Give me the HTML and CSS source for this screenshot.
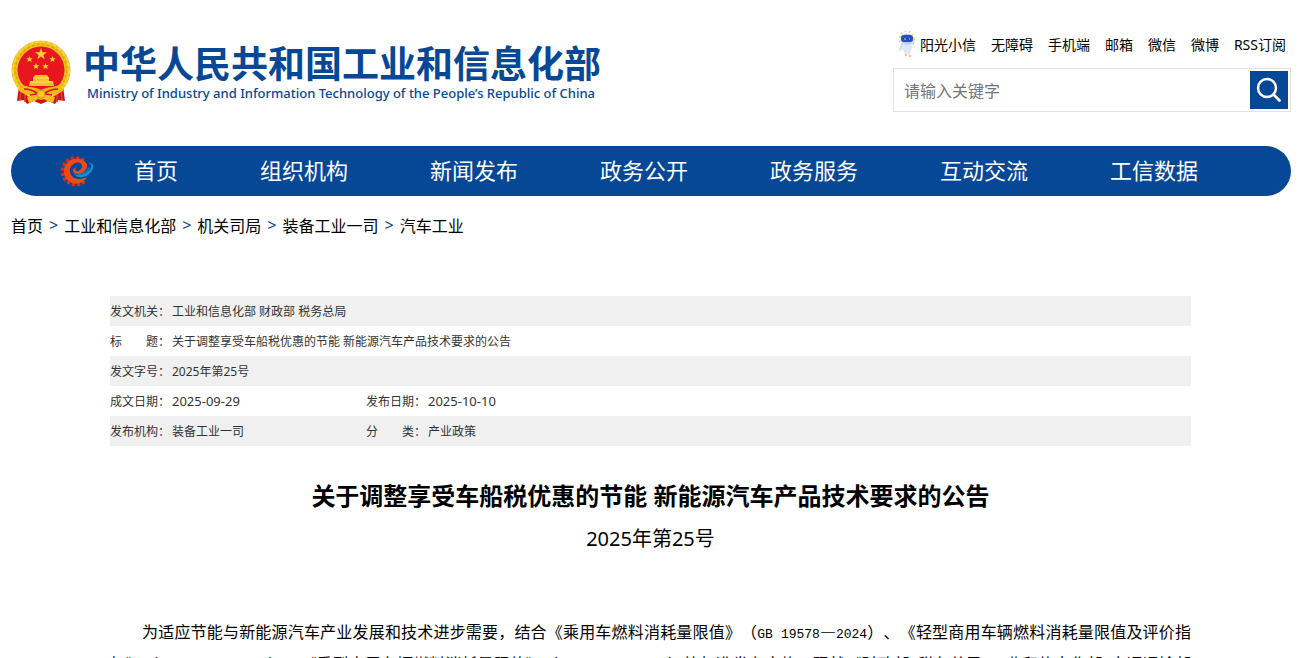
FILE: index.html
```html
<!DOCTYPE html>
<html lang="zh-CN">
<head>
<meta charset="utf-8">
<meta name="viewport" content="width=device-width, initial-scale=1">
<title>关于调整享受车船税优惠的节能 新能源汽车产品技术要求的公告</title>
<link rel="stylesheet" href="styles.css">
</head>
<body>
<div class="page">
  <header class="header">
    <a class="brand" href="#">
      <svg class="emblem" viewBox="0 0 60 66" aria-hidden="true">
        <path d="M8 46 L6 61 L13 60 L16 64 L23 61 L30 64 L37 61 L44 64 L47 60 L54 61 L52 46Z" fill="#c8141b"/>
        <path d="M10 50 L9 60 M14 52 L14 62 M19 54 L18 62 M50 50 L51 60 M46 52 L46 62 M41 54 L42 62" stroke="#ec3a2c" stroke-width="1.500"/>
        <circle cx="30" cy="30" r="29.500" fill="#f3c01f"/>
        <circle cx="30" cy="30" r="25.500" fill="none" stroke="#dfa51a" stroke-width="1.500" stroke-dasharray="3 2"/>
        <circle cx="30" cy="30" r="28" fill="none" stroke="#f9d845" stroke-width="1.500" stroke-dasharray="4 2"/>
        <circle cx="30" cy="30" r="23.500" fill="#e8161f"/>
        <path d="M30 8l1.500 4.200h4.500l-3.600 2.700 1.300 4.300-3.700-2.600-3.700 2.600 1.300-4.300-3.600-2.700h4.500z" fill="#fbd32a"/>
        <g fill="#fbd32a">
          <path id="star" d="M18.500 16l.9 2.200h2.400l-1.900 1.500.7 2.400-2.100-1.400-2.100 1.400.7-2.400-1.900-1.500h2.400z"/>
          <use href="#star" x="23"/><use href="#star" x="6.500" y="7"/><use href="#star" x="16" y="7"/>
        </g>
        <path d="M24 35h12l2 3v3h4l1 5H18l1-5h3v-3z" fill="#f5c02a"/>
        <path d="M22 38h16M20 42h20" stroke="#fde36c" stroke-width="1"/>
        <path d="M9 43 C15 48 22 46 30 50 C38 46 45 48 51 43 L52 51 C44 56 37 54 30 60 C23 54 16 56 8 51Z" fill="#f2b71a"/>
        <path d="M13 49c6 0 10 2 13 4M47 49c-6 0-10 2-13 4M19 55l7-1M41 55l-7-1" fill="none" stroke="#d8191c" stroke-width="1.600"/>
        <circle cx="30" cy="54" r="4" fill="#f8ca2c" stroke="#d98d12"/>
        <path d="M16 57l8-2 2 5-8 3zM44 57l-8-2-2 5 8 3z" fill="#f4bb21"/>
      </svg>
      <span class="brand-text">
        <span class="brand-cn">中华人民共和国工业和信息化部</span>
        <span class="brand-en">Ministry of Industry and Information Technology of the People’s Republic of China</span>
      </span>
    </a>
    <div class="tools">
      <nav class="links" aria-label="快捷链接">
        <a class="robot-link" href="#">
          <svg class="robot" viewBox="0 0 18 26" aria-hidden="true">
            <circle cx="9" cy="8" r="7.500" fill="none" stroke="#f6cf3c" stroke-width="1.600" stroke-dasharray="1.500 2.600"/>
            <path d="M5 12h8l1 5-2 5H7l-3-4z" fill="#dfe8f7"/>
            <path d="M4 13l-2 6M14 13l2-3" stroke="#cbdcf3" stroke-width="2" stroke-linecap="round"/>
            <ellipse cx="9" cy="8" rx="6.500" ry="5.500" fill="#bccdf3"/>
            <rect x="3" y="4" width="12" height="7" rx="3" fill="#2850bd"/>
            <path d="M6 8h2M11 8h1" stroke="#8fd2ff"/>
            <path d="M8 21v2M11 21v3" stroke="#dfe8f7" stroke-width="2"/>
            <path d="M7 24h2M11 25h2" stroke="#f3bd33" stroke-width="1.500"/>
          </svg>阳光小信</a>
        <a href="#">无障碍</a>
        <a href="#">手机端</a>
        <a href="#">邮箱</a>
        <a href="#">微信</a>
        <a href="#">微博</a>
        <a href="#">RSS订阅</a>
      </nav>
      <form class="search">
        <input class="search-input" type="text" placeholder="请输入关键字" aria-label="请输入关键字">
        <button class="search-button" type="button" aria-label="搜索">
          <svg viewBox="0 0 38 38" aria-hidden="true"><circle cx="17" cy="17" r="9" fill="none" stroke="#fff" stroke-width="2.500"/><path d="M23.500 23.500l6 6" stroke="#fff" stroke-width="2.800" stroke-linecap="round"/></svg>
        </button>
      </form>
    </div>
  </header>

  <nav class="mainnav" aria-label="主导航">
    <svg class="gear" viewBox="0 0 34 34" aria-hidden="true">
      <path d="M22.500 5.500 A13.500 13.500 0 1 0 26 26" fill="none" stroke="#dc2a1c" stroke-width="3.800" stroke-linecap="round" stroke-dasharray="0 5.200"/>
      <path d="M27 10 C22 2 8 3 4.500 13 C1 24 11 32 20 29 C23 28 26 25 27 23 C20 27 11 25 10 18 C9 12 15 7 20 9 C24 11 22 16 18 17 C15 18 14 15 17 13 C12 14 12 19 16 20 C22 21 28 16 27 10Z" fill="#f04a13"/>
      <path d="M14 20 C20 23 29 19 31 13 C32 10 29 9 27 10 C34 7 35 13 31 18 C26 24 18 25 14 20Z" fill="#1a8fd6"/>
      <path d="M18 20.500c5 0 10-3 11-7" fill="none" stroke="#1277bd" stroke-width="1.500"/>
    </svg>
    <a href="#">首页</a>
    <a href="#">组织机构</a>
    <a href="#">新闻发布</a>
    <a href="#">政务公开</a>
    <a href="#">政务服务</a>
    <a href="#">互动交流</a>
    <a href="#">工信数据</a>
  </nav>

  <nav class="crumbs" aria-label="当前位置">
    <a href="#">首页</a><span>&gt;</span><a href="#">工业和信息化部</a><span>&gt;</span><a href="#">机关司局</a><span>&gt;</span><a href="#">装备工业一司</a><span>&gt;</span><a href="#">汽车工业</a>
  </nav>

  <main class="article">
    <table class="meta">
      <colgroup><col class="col-label"><col class="col-value"><col class="col-label"><col></colgroup>
      <tbody>
        <tr><th scope="row">发文机关：</th><td colspan="3">工业和信息化部 财政部 税务总局</td></tr>
        <tr><th scope="row">标　　题：</th><td colspan="3">关于调整享受车船税优惠的节能 新能源汽车产品技术要求的公告</td></tr>
        <tr><th scope="row">发文字号：</th><td colspan="3">2025年第25号</td></tr>
        <tr><th scope="row">成文日期：</th><td class="date">2025-09-29</td><th scope="row">发布日期：</th><td class="date">2025-10-10</td></tr>
        <tr><th scope="row">发布机构：</th><td>装备工业一司</td><th scope="row">分　　类：</th><td>产业政策</td></tr>
      </tbody>
    </table>
    <h1 class="title">关于调整享受车船税优惠的节能 新能源汽车产品技术要求的公告</h1>
    <p class="number">2025年第25号</p>
    <p class="body-text">为适应节能与新能源汽车产业发展和技术进步需要，结合《乘用车燃料消耗量限值》（<span class="code">GB 19578</span>—<span class="code">2024</span>）、《轻型商用车辆燃料消耗量限值及评价指标》（<span class="code">GB 20997</span>—<span class="code">2024</span>）、《重型商用车辆燃料消耗量限值》（<span class="code">GB 30510</span>—<span class="code">2024</span>）等标准发布实施，现就《财政部<span class="code"> </span>税务总局<span class="code"> </span>工业和信息化部<span class="code"> </span>交通运输部关于节能<span class="code"> </span>新能源车船享受车船税优惠政策的通知》有关技术要求公告如下：</p>
  </main>
</div>
</body>
</html>
```
FILE: styles.css
```css
* { box-sizing: border-box; }

body {
  margin: 0;
  background: #fff;
  color: #000;
  font-family: "Noto Sans", "Noto Sans CJK SC", sans-serif;
  font-size: 16px;
}

a { color: inherit; text-decoration: none; }

.page { padding: 0 8px 0 11px; }

.header {
  display: flex;
  justify-content: space-between;
  align-items: flex-start;
  padding-top: 32px;
  height: 146px;
}

.brand {
  display: flex;
  gap: 12px;
  padding-top: 8px;
  color: #064796;
}

.emblem { width: 60px; height: 66px; flex: none; }

.brand-text { display: flex; flex-direction: column; padding-top: 4px; white-space: nowrap; }
.brand-cn { font-size: 37px; font-weight: 700; line-height: 40px; }
.brand-en { padding-left: 4px; font-size: 13px; font-weight: 500; line-height: 18px; }

.tools { width: 398px; }

.links {
  display: flex;
  justify-content: flex-end;
  align-items: center;
  gap: 15px;
  height: 24px;
  padding-right: 5px;
  font-size: 14px;
  white-space: nowrap;
}

.robot-link { display: flex; align-items: center; gap: 4px; }
.robot { width: 18px; height: 26px; }

.search {
  display: flex;
  margin-top: 12px;
  padding: 2px;
  border: 1px solid #e3e3e3;
}

.search-input {
  flex: 1;
  min-width: 0;
  height: 38px;
  padding: 2px 8px 0;
  border: 0;
  outline: 0;
  background: none;
  font: inherit;
}

.search-input::placeholder { color: #757575; opacity: 1; }

.search-button {
  width: 38px;
  height: 38px;
  padding: 0;
  border: 0;
  background: #064796;
}

.search-button svg { display: block; }

.mainnav {
  display: flex;
  align-items: center;
  gap: 82px;
  height: 50px;
  padding-left: 49px;
  border-radius: 25px;
  background: #064796;
  color: #fff;
  font-size: 22px;
  white-space: nowrap;
}

.mainnav a { padding-bottom: 4px; }
.gear { width: 34px; height: 34px; margin-right: -42px; }

.crumbs {
  display: flex;
  align-items: center;
  gap: 6px;
  height: 58px;
}

.crumbs span { color: #064796; }

.article { margin: 42px 100px 0 99px; }

.meta {
  width: 100%;
  border-collapse: collapse;
  table-layout: fixed;
  color: #333;
  font-size: 12px;
}

.meta tr { height: 30px; }
.meta tr:nth-child(odd) { background: #f0f0f0; }
.meta th, .meta td { padding: 2px 0 0; font-weight: 400; line-height: 18px; text-align: left; }
.meta .date { padding-top: 0; font-size: 13px; }
.col-label { width: 62px; }
.col-value { width: 194px; }

.title {
  margin: 32px 0 0;
  font-size: 24px;
  line-height: 36px;
  text-align: center;
}

.number {
  margin: 10px 0 0;
  font-size: 20px;
  line-height: 30px;
  text-align: center;
}

.body-text {
  margin: 63px 0 0;
  font-family: "Noto Sans CJK SC", sans-serif;
  line-height: 28px;
  text-align: justify;
  text-indent: 32px;
  text-spacing-trim: space-all;
}

.code { font-family: "Liberation Mono", monospace; font-size: 13px; }
```
